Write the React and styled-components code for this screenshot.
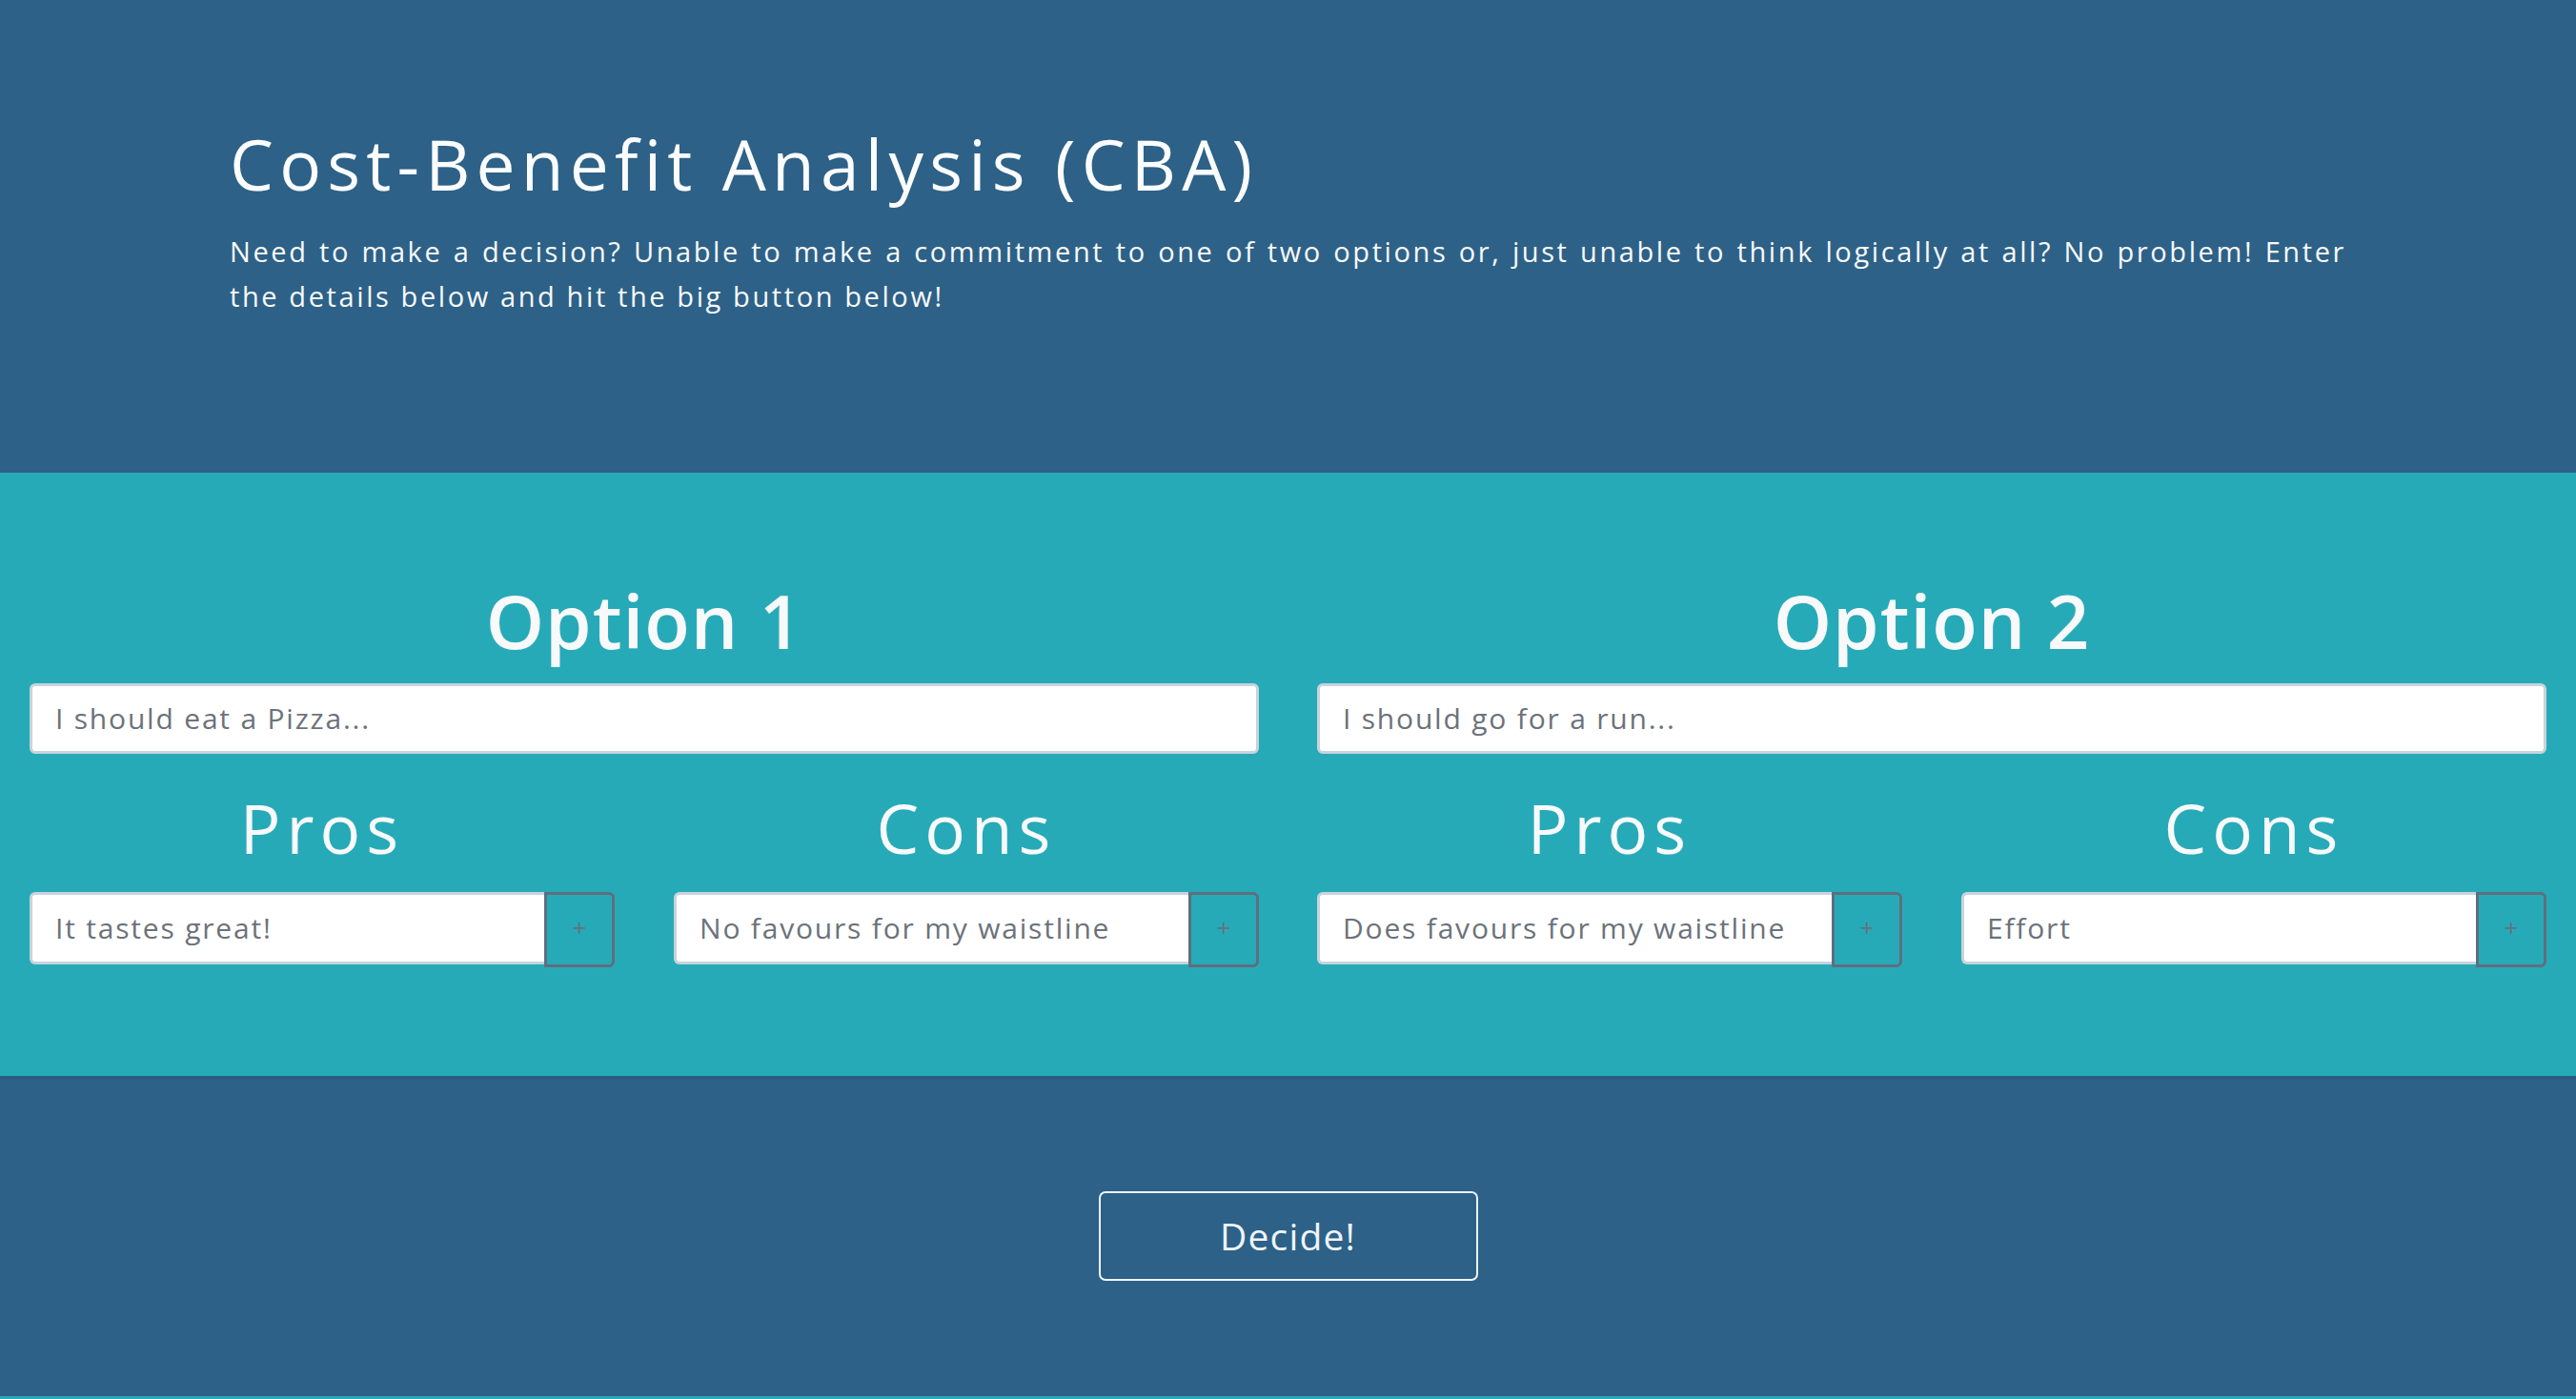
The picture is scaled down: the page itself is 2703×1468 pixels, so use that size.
import React from 'react';
import styled, { createGlobalStyle } from 'styled-components';

const DARK = '#2d6187';
const TEAL = '#27aab8';

const GlobalStyle = createGlobalStyle`
  body {
    margin: 0;
    background: ${TEAL};
    font-family: "Open Sans", "Liberation Sans", sans-serif;
    color: #f8f9fa;
  }
  * { box-sizing: border-box; }
`;

const Header = styled.header`
  background: ${DARK};
  padding: 129px 0 162px 0;
`;

const Container = styled.div`
  width: 2221px;
  margin: 0 auto;
`;

const Title = styled.h1`
  margin: 0 0 25px 0;
  font-size: 73px;
  font-weight: 400;
  line-height: 86px;
  letter-spacing: 6.2px;
  color: #fbfcfd;
`;

const Lead = styled.p`
  margin: 0;
  font-size: 29px;
  line-height: 47px;
  text-align: justify;
  letter-spacing: 2.6px;
`;

const Options = styled.section`
  background: ${TEAL};
  padding: 109px 31px 114px 31px;
  display: grid;
  grid-template-columns: 1fr 1fr;
  column-gap: 61px;
`;

const OptionCol = styled.div`
  display: flex;
  flex-direction: column;
`;

const OptionTitle = styled.h2`
  margin: 0 0 18px 0;
  text-align: center;
  font-size: 78px;
  font-weight: 600;
  line-height: 1.2;
  letter-spacing: 1px;
  color: #f7f9fa;
`;

const TextInput = styled.input`
  width: 100%;
  height: ${p => p.$h || 74}px;
  border: 3px solid #c9d3dc;
  border-radius: ${p => (p.$grouped ? '6px 0 0 6px' : '6px')};
  ${p => p.$grouped && 'border-right: none;'}
  background: #fff;
  padding: 0 24px;
  font-family: "Open Sans", "Liberation Sans", sans-serif;
  font-size: 30px;
  letter-spacing: 1.8px;
  color: #495057;
  outline: none;

  &::placeholder {
    color: #6c727a;
  }
`;

const Lists = styled.div`
  margin-top: 36px;
  display: grid;
  grid-template-columns: 1fr 1fr;
  column-gap: 62px;
`;

const ListCol = styled.div`
  display: flex;
  flex-direction: column;
`;

const ListTitle = styled.h3`
  margin: 0 0 25px 0;
  text-align: center;
  font-size: 71px;
  font-weight: 400;
  line-height: 84px;
  letter-spacing: 6px;
  color: #f7f9fa;
`;

const InputGroup = styled.div`
  display: flex;
  align-items: flex-start;
`;

const AddButton = styled.button`
  flex: 0 0 74px;
  height: 79px;
  border: 3px solid #5f6e7e;
  border-radius: 0 6px 6px 0;
  background: transparent;
  color: #66727e;
  font-family: "Open Sans", "Liberation Sans", sans-serif;
  font-size: 26px;
  line-height: 1;
  padding: 0 0 4px 0;
`;

const Footer = styled.section`
  background: ${DARK};
  border-top: 3px solid #2a5a7f;
  padding: 118px 0 121px 0;
  display: flex;
  justify-content: center;
`;

const DecideButton = styled.button`
  width: 398px;
  height: 94px;
  border: 2px solid #eef6fb;
  border-radius: 7px;
  background: transparent;
  color: #eef4f8;
  font-family: "Open Sans", "Liberation Sans", sans-serif;
  font-size: 39px;
  letter-spacing: 1.2px;
`;

const options = [
  {
    title: 'Option 1',
    placeholder: 'I should eat a Pizza...',
    pros: 'It tastes great!',
    cons: 'No favours for my waistline',
  },
  {
    title: 'Option 2',
    placeholder: 'I should go for a run...',
    pros: 'Does favours for my waistline',
    cons: 'Effort',
  },
];

const ListBlock = ({ label, placeholder }) => (
  <ListCol>
    <ListTitle>{label}</ListTitle>
    <InputGroup>
      <TextInput $grouped $h={76} placeholder={placeholder} />
      <AddButton>+</AddButton>
    </InputGroup>
  </ListCol>
);

export default function App() {
  return (
    <>
      <GlobalStyle />
      <Header>
        <Container>
          <Title>Cost-Benefit Analysis (CBA)</Title>
          <Lead>
            Need to make a decision? Unable to make a commitment to one of two options or, just unable to think
            logically at all? No problem! Enter the details below and hit the big button below!
          </Lead>
        </Container>
      </Header>
      <Options>
        {options.map((opt) => (
          <OptionCol key={opt.title}>
            <OptionTitle>{opt.title}</OptionTitle>
            <TextInput placeholder={opt.placeholder} />
            <Lists>
              <ListBlock label="Pros" placeholder={opt.pros} />
              <ListBlock label="Cons" placeholder={opt.cons} />
            </Lists>
          </OptionCol>
        ))}
      </Options>
      <Footer>
        <DecideButton>Decide!</DecideButton>
      </Footer>
    </>
  );
}
